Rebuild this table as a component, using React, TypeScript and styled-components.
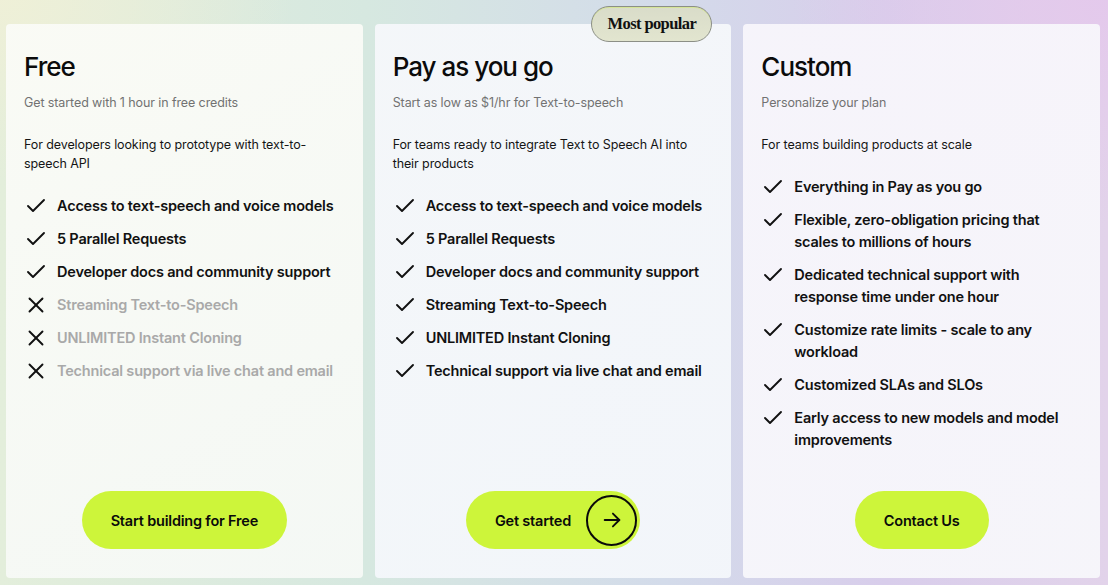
import React from "react";
import styled, { createGlobalStyle } from "styled-components";

const GlobalStyle = createGlobalStyle`
  html, body { margin: 0; padding: 0; }
  body {
    width: 1108px;
    height: 585px;
    overflow: hidden;
    font-family: Inter, "Noto Sans", Arial, sans-serif;
    -webkit-font-smoothing: antialiased;
  }
  * { box-sizing: border-box; }
`;

const Page = styled.main`
  width: 1108px;
  height: 585px;
  padding: 24px 8px 7px 6px;
  display: grid;
  grid-template-columns: repeat(3, 1fr);
  gap: 12px;
  background:
    radial-gradient(ellipse 420px 260px at 0% 0%, rgba(240, 240, 215, 0.9), rgba(240, 240, 215, 0) 70%),
    radial-gradient(ellipse 420px 300px at 100% 0%, rgba(228, 200, 236, 0.9), rgba(228, 200, 236, 0) 75%),
    linear-gradient(90deg, #e3eedb 0%, #d6e8e0 33%, #d3dbea 60%, #d8cdeb 80%, #e2d3ea 100%);
`;

const Card = styled.section<{ $tint: string }>`
  position: relative;
  display: flex;
  flex-direction: column;
  padding: 26px 18px 29px 18px;
  border-radius: 4px;
  background: ${(p) => p.$tint};
`;

const Badge = styled.div`
  position: absolute;
  top: -18px;
  right: 19px;
  width: 121px;
  height: 36px;
  border-radius: 18px;
  border: 1.5px solid #8c8f86;
  background: linear-gradient(180deg, #d9dcc9 0%, #e2e5cf 100%);
  box-shadow: inset 0 1px 0 rgba(205, 245, 60, 0.35);
  display: flex;
  align-items: center;
  justify-content: center;
  font-family: "Liberation Serif", "Times New Roman", serif;
  font-weight: 700;
  font-size: 16.5px;
  letter-spacing: -0.6px;
  color: #111;
`;

const Title = styled.h2`
  margin: 0;
  font-size: 26px;
  line-height: 34px;
  font-weight: 500;
  letter-spacing: -1px;
  color: #0b0b0b;
`;

const Subtitle = styled.p`
  margin: 10px 0 0 0;
  font-size: 12.5px;
  line-height: 18px;
  color: #727272;
  letter-spacing: -0.1px;
`;

const Description = styled.p`
  margin: 23px 0 0 0;
  font-size: 12.5px;
  line-height: 19px;
  color: #151515;
  letter-spacing: -0.1px;
`;

const FeatureList = styled.ul`
  list-style: none;
  margin: 22px 0 0 0;
  padding: 0;
  display: flex;
  flex-direction: column;
  gap: 11px;
`;

const Feature = styled.li<{ $off?: boolean }>`
  display: flex;
  align-items: flex-start;
  gap: 9px;
  font-size: 14.5px;
  line-height: 22px;
  font-weight: 600;
  letter-spacing: -0.2px;
  color: ${(p) => (p.$off ? "#a9a9a9" : "#111")};
`;

const IconBox = styled.span`
  flex: 0 0 24px;
  width: 24px;
  height: 22px;
  display: flex;
  align-items: center;
  justify-content: center;
  color: #111;
`;

const FeatureText = styled.span`
  flex: 1;
`;

const ButtonRow = styled.div`
  margin-top: auto;
  display: flex;
  justify-content: center;
`;

const PillButton = styled.button<{ $withArrow?: boolean }>`
  height: 58px;
  border: none;
  border-radius: 29px;
  background: #cdf53a;
  color: #0a0a0a;
  font-family: Inter, "Noto Sans", Arial, sans-serif;
  font-size: 14.5px;
  font-weight: 600;
  letter-spacing: -0.2px;
  display: flex;
  align-items: center;
  gap: 15px;
  padding: ${(p) => (p.$withArrow ? "0 3px 0 29px" : "0 29px")};
  cursor: pointer;
`;

const ArrowCircle = styled.span`
  width: 51px;
  height: 51px;
  border-radius: 50%;
  border: 2px solid #0a0a0a;
  display: flex;
  align-items: center;
  justify-content: center;
`;

const CheckIcon = () => (
  <svg width="24" height="24" viewBox="0 0 24 24" fill="none" stroke="currentColor" strokeWidth="1.9" strokeLinecap="round" strokeLinejoin="round">
    <path d="M20 6 9 17l-5-5" />
  </svg>
);

const CrossIcon = () => (
  <svg width="24" height="24" viewBox="0 0 24 24" fill="none" stroke="currentColor" strokeWidth="1.9" strokeLinecap="round" strokeLinejoin="round">
    <path d="M18.5 5.5 5.5 18.5" />
    <path d="m5.5 5.5 13 13" />
  </svg>
);

const ArrowIcon = () => (
  <svg width="22" height="22" viewBox="0 0 24 24" fill="none" stroke="currentColor" strokeWidth="2" strokeLinecap="round" strokeLinejoin="round">
    <path d="M4 12h16" />
    <path d="m13 5 7 7-7 7" />
  </svg>
);

type Item = { text: string; off?: boolean };

type Plan = {
  title: string;
  subtitle: string;
  description: string;
  tint: string;
  features: Item[];
  cta: string;
  arrow?: boolean;
  badge?: string;
};

const plans: Plan[] = [
  {
    title: "Free",
    subtitle: "Get started with 1 hour in free credits",
    description: "For developers looking to prototype with text-to-speech API",
    tint: "linear-gradient(160deg, rgba(250,251,246,0.97) 0%, rgba(246,249,246,0.95) 100%)",
    features: [
      { text: "Access to text-speech and voice models" },
      { text: "5 Parallel Requests" },
      { text: "Developer docs and community support" },
      { text: "Streaming Text-to-Speech", off: true },
      { text: "UNLIMITED Instant Cloning", off: true },
      { text: "Technical support via live chat and email", off: true },
    ],
    cta: "Start building for Free",
  },
  {
    title: "Pay as you go",
    subtitle: "Start as low as $1/hr for Text-to-speech",
    description: "For teams ready to integrate Text to Speech AI into their products",
    tint: "linear-gradient(160deg, rgba(245,247,250,0.97) 0%, rgba(244,247,251,0.95) 100%)",
    features: [
      { text: "Access to text-speech and voice models" },
      { text: "5 Parallel Requests" },
      { text: "Developer docs and community support" },
      { text: "Streaming Text-to-Speech" },
      { text: "UNLIMITED Instant Cloning" },
      { text: "Technical support via live chat and email" },
    ],
    cta: "Get started",
    arrow: true,
    badge: "Most popular",
  },
  {
    title: "Custom",
    subtitle: "Personalize your plan",
    description: "For teams building products at scale",
    tint: "linear-gradient(160deg, rgba(247,245,251,0.97) 0%, rgba(247,247,251,0.95) 100%)",
    features: [
      { text: "Everything in Pay as you go" },
      { text: "Flexible, zero-obligation pricing that scales to millions of hours" },
      { text: "Dedicated technical support with response time under one hour" },
      { text: "Customize rate limits - scale to any workload" },
      { text: "Customized SLAs and SLOs" },
      { text: "Early access to new models and model improvements" },
    ],
    cta: "Contact Us",
  },
];

export default function App() {
  return (
    <>
      <GlobalStyle />
      <Page>
        {plans.map((plan) => (
          <Card key={plan.title} $tint={plan.tint}>
            {plan.badge && <Badge>{plan.badge}</Badge>}
            <Title>{plan.title}</Title>
            <Subtitle>{plan.subtitle}</Subtitle>
            <Description>{plan.description}</Description>
            <FeatureList>
              {plan.features.map((f) => (
                <Feature key={f.text} $off={f.off}>
                  <IconBox>{f.off ? <CrossIcon /> : <CheckIcon />}</IconBox>
                  <FeatureText>{f.text}</FeatureText>
                </Feature>
              ))}
            </FeatureList>
            <ButtonRow>
              <PillButton $withArrow={plan.arrow}>
                {plan.cta}
                {plan.arrow && (
                  <ArrowCircle>
                    <ArrowIcon />
                  </ArrowCircle>
                )}
              </PillButton>
            </ButtonRow>
          </Card>
        ))}
      </Page>
    </>
  );
}
